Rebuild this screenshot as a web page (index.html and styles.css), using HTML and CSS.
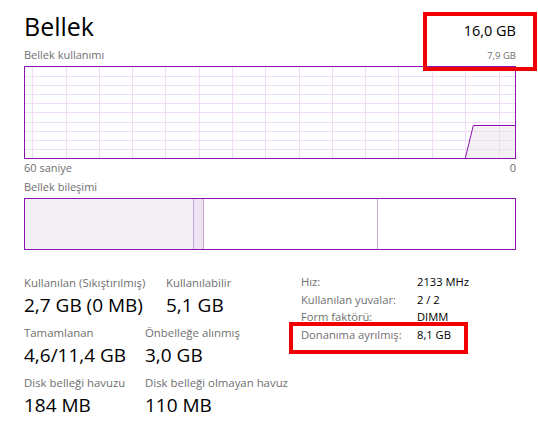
FILE: index.html
```html
<!DOCTYPE html>
<html lang="tr">
<head>
<meta charset="utf-8">
<title>Bellek</title>
<link rel="stylesheet" href="styles.css">
</head>
<body>
<div class="page">
  <div class="header">
    <div class="title">Bellek</div>
    <div class="total">16,0 GB</div>
  </div>
  <div class="subrow">
    <span>Bellek kullanımı</span>
    <span class="max">7,9 GB</span>
  </div>
  <div class="graph">
    <svg class="graph-svg" width="490" height="91" viewBox="0 0 490 91" preserveAspectRatio="none">
      <polygon points="440.3,91 448.3,58.5 490,58.5 490,91" fill="#f3f1f4"/>
      <g stroke="#efdcf5" stroke-width="1">
        <line x1="7.5" y1="0" x2="7.5" y2="91"/>
        <line x1="41.5" y1="0" x2="41.5" y2="91"/>
        <line x1="74.5" y1="0" x2="74.5" y2="91"/>
        <line x1="107.5" y1="0" x2="107.5" y2="91"/>
        <line x1="140.5" y1="0" x2="140.5" y2="91"/>
        <line x1="174.5" y1="0" x2="174.5" y2="91"/>
        <line x1="207.5" y1="0" x2="207.5" y2="91"/>
        <line x1="240.5" y1="0" x2="240.5" y2="91"/>
        <line x1="274.5" y1="0" x2="274.5" y2="91"/>
        <line x1="307.5" y1="0" x2="307.5" y2="91"/>
        <line x1="340.5" y1="0" x2="340.5" y2="91"/>
        <line x1="373.5" y1="0" x2="373.5" y2="91"/>
        <line x1="407.5" y1="0" x2="407.5" y2="91"/>
        <line x1="440.5" y1="0" x2="440.5" y2="91"/>
        <line x1="474.5" y1="0" x2="474.5" y2="91"/>
        <line x1="0" y1="9.5" x2="490" y2="9.5"/>
        <line x1="0" y1="18.5" x2="490" y2="18.5"/>
        <line x1="0" y1="27.5" x2="490" y2="27.5"/>
        <line x1="0" y1="36.5" x2="490" y2="36.5"/>
        <line x1="0" y1="45.5" x2="490" y2="45.5"/>
        <line x1="0" y1="55.5" x2="490" y2="55.5"/>
        <line x1="0" y1="64.5" x2="490" y2="64.5"/>
        <line x1="0" y1="73.5" x2="490" y2="73.5"/>
        <line x1="0" y1="82.5" x2="490" y2="82.5"/>
      </g>
      <polyline points="440.3,91 448.3,58.5 490,58.5" fill="none" stroke="#8b12ae" stroke-width="1"/>
    </svg>
  </div>
  <div class="axis">
    <span>60 saniye</span>
    <span>0</span>
  </div>
  <div class="section-label">Bellek bileşimi</div>
  <div class="composition">
    <div class="seg seg-inuse"></div>
    <div class="seg seg-modified"></div>
    <div class="seg seg-standby"></div>
    <div class="seg seg-free"></div>
  </div>
  <div class="stats">
    <div class="stats-left">
      <div class="stat-row">
        <div class="stat stat-first-wide">
          <div class="stat-label">Kullanılan (Sıkıştırılmış)</div>
          <div class="stat-value">2,7 GB (0 MB)</div>
        </div>
        <div class="stat">
          <div class="stat-label">Kullanılabilir</div>
          <div class="stat-value">5,1 GB</div>
        </div>
      </div>
      <div class="stat-row">
        <div class="stat stat-first">
          <div class="stat-label">Tamamlanan</div>
          <div class="stat-value">4,6/11,4 GB</div>
        </div>
        <div class="stat">
          <div class="stat-label">Önbelleğe alınmış</div>
          <div class="stat-value">3,0 GB</div>
        </div>
      </div>
      <div class="stat-row">
        <div class="stat stat-first">
          <div class="stat-label">Disk belleği havuzu</div>
          <div class="stat-value">184 MB</div>
        </div>
        <div class="stat">
          <div class="stat-label">Disk belleği olmayan havuz</div>
          <div class="stat-value">110 MB</div>
        </div>
      </div>
    </div>
    <div class="props">
      <span class="prop-label">Hız:</span><span class="prop-value">2133 MHz</span>
      <span class="prop-label">Kullanılan yuvalar:</span><span class="prop-value">2 / 2</span>
      <span class="prop-label">Form faktörü:</span><span class="prop-value">DIMM</span>
      <span class="prop-label">Donanıma ayrılmış:</span><span class="prop-value">8,1 GB</span>
    </div>
  </div>
</div>
<div class="mark mark-total"></div>
<div class="mark mark-reserved"></div>
</body>
</html>
```
FILE: styles.css
```css
html, body {
  margin: 0;
  padding: 0;
  background: #ffffff;
}

body {
  font-family: "Open Sans", "Noto Sans", sans-serif;
  color: #000000;
  width: 538px;
  height: 437px;
  overflow: hidden;
  position: relative;
}

.page {
  padding: 8px 22px 0 24px;
}

.header {
  display: flex;
  justify-content: space-between;
  align-items: baseline;
  height: 36px;
}

.title {
  font-size: 25px;
  line-height: 36px;
}

.total {
  font-size: 14.5px;
  line-height: 20px;
}

.subrow,
.axis {
  display: flex;
  justify-content: space-between;
  align-items: baseline;
  font-size: 11px;
  line-height: 15px;
  color: #6f6f6f;
}

.subrow {
  margin-top: 3px;
}

.max {
  font-size: 9.5px;
}

.graph {
  margin-top: 3px;
  border: 1px solid #8b12ae;
  height: 91px;
}

.graph-svg {
  display: block;
  width: 100%;
  height: 91px;
}

.axis {
  margin-top: 1px;
}

.section-label {
  margin-top: 4px;
  font-size: 11px;
  line-height: 15px;
  color: #6f6f6f;
}

.composition {
  margin-top: 4px;
  border: 1px solid #8b12ae;
  height: 50px;
  display: flex;
}

.seg {
  height: 100%;
}

.seg-inuse {
  width: 168px;
  background: #f3f0f5;
  border-right: 1px solid #c9a7d7;
}

.seg-modified {
  width: 9px;
  background: #ede3f3;
  border-right: 1px solid #c9a7d7;
}

.seg-standby {
  width: 173px;
  border-right: 1px solid #c9a7d7;
}

.seg-free {
  flex: 1;
}

.stats {
  margin-top: 23px;
  display: flex;
}

.stats-left {
  flex: 0 0 277px;
  padding-top: 2px;
}

.stat-row {
  display: flex;
  height: 50px;
}

.stat-first-wide {
  flex: 0 0 142px;
}

.stat-first {
  flex: 0 0 121px;
}

.stat-label {
  font-size: 11.4px;
  line-height: 15px;
  color: #6f6f6f;
  white-space: nowrap;
}

.stat-value {
  margin-top: 3px;
  font-size: 19px;
  line-height: 24px;
  white-space: nowrap;
}

.props {
  display: grid;
  grid-template-columns: 116px auto;
  font-size: 11.2px;
  line-height: 17.7px;
  align-content: start;
}

.prop-label {
  color: #6f6f6f;
  white-space: nowrap;
}

.prop-value {
  color: #000000;
  white-space: nowrap;
}

.mark {
  position: absolute;
  border: 4px solid #f00000;
  box-sizing: border-box;
}

.mark-total {
  left: 423px;
  top: 12px;
  width: 114px;
  height: 59px;
}

.mark-reserved {
  left: 289px;
  top: 322px;
  width: 179px;
  height: 32px;
}
```
